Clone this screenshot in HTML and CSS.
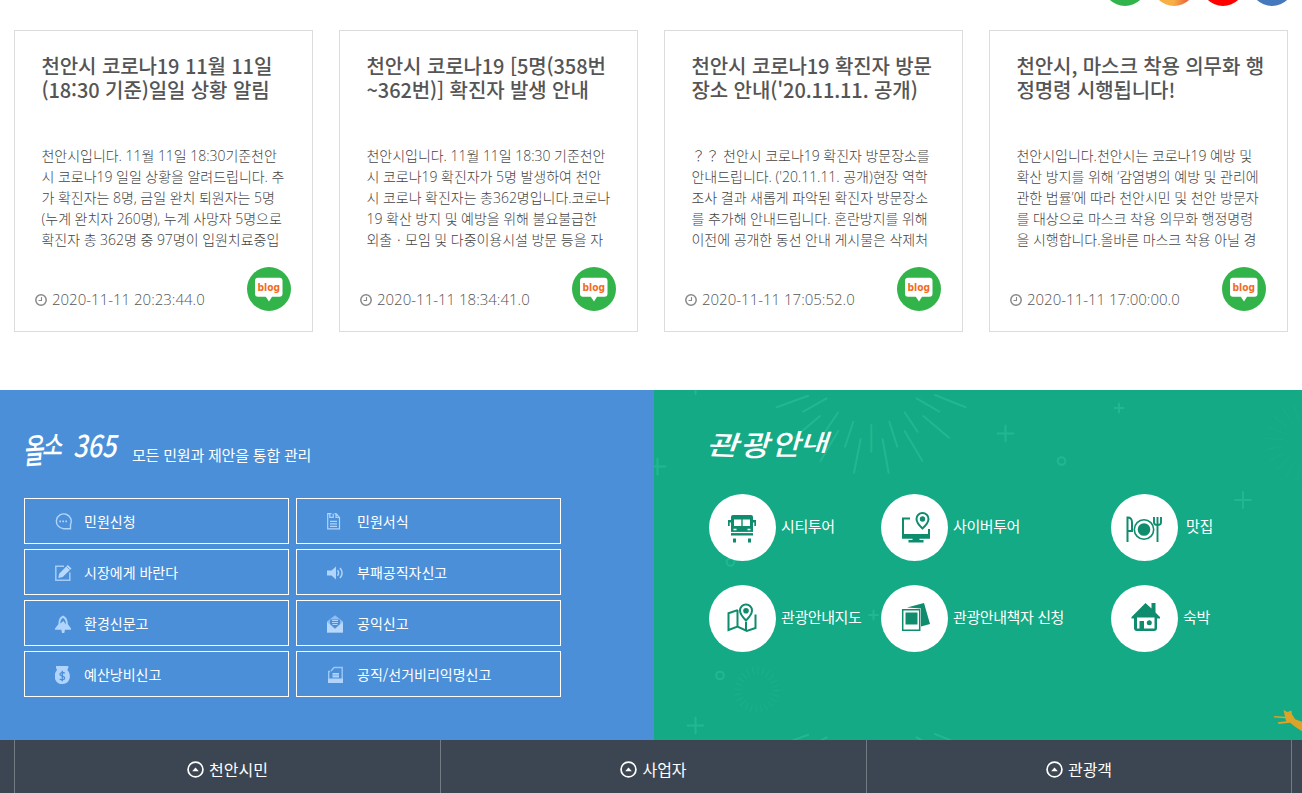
FILE: index.html
```html
<!DOCTYPE html>
<html lang="ko">
<head>
  <meta charset="UTF-8">
  <meta name="viewport" content="width=device-width, initial-scale=1.0">
  <title>천안시</title>
  <link rel="stylesheet" href="styles.css">
</head>
<body>
  <!-- shared shapes -->
  <svg width="0" height="0" class="defs">
    <defs>
      <symbol id="blog" viewBox="0 0 44 44">
        <circle cx="22" cy="22" r="22" fill="#33b44a"/>
        <path d="M11 10.700h21.500a3 3 0 0 1 3 3v13a3 3 0 0 1-3 3h-7.500L22 34.500l-3.200-4.800H11a3 3 0 0 1-3-3v-13a3 3 0 0 1 3-3z" fill="#fff"/>
        <text x="10.600" y="23.500" textLength="22.400" lengthAdjust="spacingAndGlyphs" class="blog-text">blog</text>
      </symbol>
      <symbol id="clock" viewBox="0 0 12 12">
        <circle cx="6" cy="6" r="5.200" fill="none" stroke="#888" stroke-width="1.500"/>
        <path d="M6.500 3v3.500H3.500" fill="none" stroke="#888" stroke-width="1.100"/>
      </symbol>
      <symbol id="up" viewBox="0 0 16 16">
        <circle cx="8" cy="8" r="7" fill="none" stroke="#fff" stroke-width="1.600"/>
        <path d="M4.900 9.600L8 6l3.100 3.600z" fill="#fff"/>
      </symbol>
      <g id="plus"><path d="M-8 0H8M0-8V8"/></g>
      <g id="plus-s"><path d="M-4.500 0h9M0-4.500v9"/></g>
      <g id="burst">
        <path d="M-94.700-27.700L-63-39.300M-68-23.300L-44.700-36.700M-51.300-19L-77 2.700M-33-22.700L-46.300-3.300M-33-4L-50.700 25.700M-18-13.300L-26.300 11.700M-10.700 4.300L-17.300 37.700M0-10V16.700M11.300 4.300L17.300 37.700M18-13.300L26 11.700M33.300-22.700L46.300-3.300M33.300-4L51 25.700M52-19L77.700 2.700M45.300-36.700L68-23.300M63.700-40L94.300-27.700"/>
      </g>
    </defs>
  </svg>

  <div class="sns">
    <span class="sns-item naver"></span>
    <span class="sns-item insta"></span>
    <span class="sns-item youtube"></span>
    <span class="sns-item facebook"></span>
  </div>

  <div class="cards">
    <div class="card">
      <h3>천안시 코로나19 11월 11일<br>(18:30 기준)일일 상황 알림</h3>
      <p>천안시입니다. 11월 11일 18:30기준천안<br>시 코로나19 일일 상황을 알려드립니다. 추<br>가 확진자는 8명, 금일 완치 퇴원자는 5명<br>(누계 완치자 260명), 누계 사망자 5명으로<br>확진자 총 362명 중 97명이 입원치료중입</p>
      <div class="card-foot">
        <svg class="clock"><use href="#clock"/></svg>
        <span class="date">2020-11-11 20:23:44.0</span>
        <svg class="badge"><use href="#blog"/></svg>
      </div>
    </div>
    <div class="card">
      <h3>천안시 코로나19 [5명(358번<br>~362번)] 확진자 발생 안내</h3>
      <p>천안시입니다. 11월 11일 18:30 기준천안<br>시 코로나19 확진자가 5명 발생하여 천안<br>시 코로나 확진자는 총362명입니다.코로나<br>19 확산 방지 및 예방을 위해 불요불급한<br>외출ㆍ모임 및 다중이용시설 방문 등을 자</p>
      <div class="card-foot">
        <svg class="clock"><use href="#clock"/></svg>
        <span class="date">2020-11-11 18:34:41.0</span>
        <svg class="badge"><use href="#blog"/></svg>
      </div>
    </div>
    <div class="card">
      <h3>천안시 코로나19 확진자 방문<br>장소 안내('20.11.11. 공개)</h3>
      <p>？？ 천안시 코로나19 확진자 방문장소를<br>안내드립니다. ('20.11.11. 공개)현장 역학<br>조사 결과 새롭게 파악된 확진자 방문장소<br>를 추가해 안내드립니다. 혼란방지를 위해<br>이전에 공개한 동선 안내 게시물은 삭제처</p>
      <div class="card-foot">
        <svg class="clock"><use href="#clock"/></svg>
        <span class="date">2020-11-11 17:05:52.0</span>
        <svg class="badge"><use href="#blog"/></svg>
      </div>
    </div>
    <div class="card">
      <h3>천안시, 마스크 착용 의무화 행<br>정명령 시행됩니다!</h3>
      <p>천안시입니다.천안시는 코로나19 예방 및<br>확산 방지를 위해 ‘감염병의 예방 및 관리에<br>관한 법률’에 따라 천안시민 및 천안 방문자<br>를 대상으로 마스크 착용 의무화 행정명령<br>을 시행합니다.올바른 마스크 착용 아닐 경</p>
      <div class="card-foot">
        <svg class="clock"><use href="#clock"/></svg>
        <span class="date">2020-11-11 17:00:00.0</span>
        <svg class="badge"><use href="#blog"/></svg>
      </div>
    </div>
  </div>

  <div class="panels">
    <section class="minwon">
      <div class="minwon-head">
        <svg class="brush" width="100" height="52" viewBox="0 0 100 52">
          <text x="-1" y="40" font-size="34" textLength="20" lengthAdjust="spacingAndGlyphs" transform="rotate(-4 12 30)">올</text>
          <text x="18" y="32" font-size="27" textLength="20" lengthAdjust="spacingAndGlyphs">소</text>
          <text x="49" y="34" font-size="30" textLength="43" lengthAdjust="spacingAndGlyphs">365</text>
        </svg>
        <span>모든 민원과 제안을 통합 관리</span>
      </div>
      <div class="minwon-list">
        <a class="minwon-item">
          <svg viewBox="0 0 18 18"><path d="M15.500 15.700H8.500A7.400 7.400 0 1 1 15.500 11.500z" fill="none" stroke="#b0d4fb" stroke-width="1.400"/><path d="M4.300 7.600h1.700v1.700H4.300zM7.300 7.600H9v1.700H7.300zM10.300 7.600H12v1.700h-1.700z" fill="#b0d4fb"/></svg>
          민원신청
        </a>
        <a class="minwon-item">
          <svg viewBox="0 0 18 18"><path d="M4.500.7H.7v15.100h11.800V4.500L9 .7H7.500M9 .7v3.800h3.500M3 8.300h7M3 10.800h7M3 13.300h7M2.800.7v3.600h3.400V.7" fill="none" stroke="#b0d4fb" stroke-width="1.200"/></svg>
          민원서식
        </a>
        <a class="minwon-item">
          <svg viewBox="0 0 18 18"><path d="M9 2.200H.8v14.100h14V8.500" fill="none" stroke="#a3cbf7" stroke-width="1.500"/><path d="M3.300 14l.9-4.300L12.700.9 16.500 4.400 7.700 13z" fill="#b9d9fc"/><path d="M11.500 2.500l3.400 3.300" stroke="#4b8fd9" stroke-width=".7"/></svg>
          시장에게 바란다
        </a>
        <a class="minwon-item">
          <svg viewBox="0 0 18 18"><path d="M0 6.500h4.500L9 2.500v13l-4.500-4H0z" fill="#b0d4fb"/><path d="M10.500 6.300q2.200 2.700 0 5.400M13 4q4.200 5 0 10" fill="none" stroke="#b0d4fb" stroke-width="1.500"/></svg>
          부패공직자신고
        </a>
        <a class="minwon-item">
          <svg viewBox="0 0 18 18"><path d="M8 .5C4.500 2 3.500 5 3.500 9L0 13.500v1.300h6.300L7 18h2.300l.7-3.200h6v-1.300L12.800 9C12.800 5 11.500 2 8 .5z" fill="#b0d4fb"/><path d="M7.800 2.700C6 4.300 5.300 6 5.300 8.500L8.500 6l2.300 3.600C11.200 6.500 10 4 7.800 2.700z" fill="#4b8fd9"/></svg>
          환경신문고
        </a>
        <a class="minwon-item">
          <svg viewBox="0 0 18 18"><path d="M0 6.500L8 .3l8 6.200v11H0z" fill="#8dbef3"/><path d="M0 7l8 7 8-7v10.500H0z" fill="#b9d9fc"/><path d="M3 4.500h10V9l-5 4.500L3 9z" fill="#4b8fd9"/><path d="M5 5.500h6M5 7.500h6M5.500 9.500h5" stroke="#b0d4fb"/></svg>
          공익신고
        </a>
        <a class="minwon-item">
          <svg viewBox="0 0 18 18"><path d="M1 0h12.300v2l-1 2c4 3 4 14-4.800 14S-2 8 2 4L1 2z" fill="#b0d4fb"/><path d="M9.800 7.300C8 6 4.800 6.300 5 8.500c.3 2 4.600 1.300 4.700 3.500.1 2-3.400 2.300-5 .9M7.300 4.800v10.400" fill="none" stroke="#4b8fd9" stroke-width="1.300"/></svg>
          예산낭비신고
        </a>
        <a class="minwon-item">
          <svg viewBox="0 0 18 18"><path d="M1.700 14V5.500h1.500M4 5L7 1.500h8.200V14" fill="none" stroke="#9cc7f5" stroke-width="1.400"/><path d="M1 12.500h15V17H1zM5.500 7h6.500v4.500H5.500z" fill="#b0d4fb"/><path d="M6 9h6" stroke="#78afe9"/></svg>
          공직/선거비리익명신고
        </a>
      </div>
    </section>

    <section class="tour">
      <svg class="tour-bg" viewBox="0 0 648 350" fill="none" stroke="#22b791" stroke-width="2" stroke-linecap="round">
        <use href="#burst" x="217.300" y="45"/>
        <use href="#burst" x="217.300" y="384"/>
        <use href="#plus" x="3.500" y="76.500"/>
        <use href="#plus" x="41.500" y="-4"/>
        <use href="#plus" x="41.500" y="335.500"/>
        <use href="#plus" x="351.500" y="43.500"/>
        <use href="#plus" x="589" y="110"/>
        <use href="#plus-s" x="219.500" y="225"/>
        <use href="#plus-s" x="465" y="18"/>
        <circle cx="76.500" cy="172" r="3.800"/>
        <circle cx="66" cy="285.500" r="3.800"/>
        <circle cx="407.500" cy="71" r="3.800"/>
        <circle cx="103" cy="300" r="19" stroke="#1ab08a" stroke-width="8" stroke-dasharray="1 3.970" stroke-linecap="butt"/>
        <circle cx="651" cy="52" r="30" stroke="#19ae89" stroke-width="20" stroke-dasharray=".8 8" stroke-linecap="butt"/>
        <path d="M620 326l11 .7L629.500 320l4 2 4-1.600.3 3.600 3.300 5.300 7 2.400v9.600l-7-4.600-5-4-11.500 1.300-.9-1.700 8.600-1-1-3-11-.8z" fill="#dba32a" stroke="none"/>
      </svg>
      <div class="tour-inner">
        <svg class="brush" width="130" height="44" viewBox="0 0 130 44">
          <text x="-3" y="32" font-size="27" textLength="32" lengthAdjust="spacingAndGlyphs" transform="rotate(2 16 22)">관</text>
          <text x="31" y="33" font-size="29" textLength="29" lengthAdjust="spacingAndGlyphs">광</text>
          <text x="62" y="32" font-size="29" textLength="29" lengthAdjust="spacingAndGlyphs">안</text>
          <text x="91" y="28" font-size="23" textLength="28" lengthAdjust="spacingAndGlyphs">내</text>
        </svg>
        <div class="tour-list">
          <a class="tour-item">
            <span class="tour-icon bus"><svg viewBox="0 0 34 34"><path d="M7 3h18q2 0 2 2v18.500H5V5q0-2 2-2zM7 26.500h3v4H7zM22 26.500h3v4h-3z" fill="#0f8c6d"/><path d="M2 8h3v2.500H3.700V14H2zM27 8h3v6h-1.700v-3.500H27z" fill="#0f8c6d"/><path d="M8 7.500h7.300V14H8zM16.700 7.500H24V14h-7.300z" fill="#fff"/><path d="M5 20.500h22" stroke="#fff" stroke-width="1.200"/><path d="M7.500 17.500h3M21.500 17.500h3" stroke="#fff" stroke-width="1.500"/></svg></span>
            <span class="label">시티투어</span>
          </a>
          <a class="tour-item">
            <span class="tour-icon"><svg viewBox="0 0 34 34"><path d="M12 6.500H5v19h26V17" fill="none" stroke="#0f8c6d" stroke-width="2"/><path d="M4 22h28v4.500H4zM14.500 26.500h7V28h4v2.500h-15V28h4z" fill="#0f8c6d"/><path d="M24.500 16.500q-6-5.500-6-9.500a6 6 0 0 1 12 0q0 4-6 9.500z" fill="#fff" stroke="#0f8c6d" stroke-width="2"/><circle cx="24.500" cy="7" r="2.700" fill="#0f8c6d"/></svg></span>
            <span class="label">사이버투어</span>
          </a>
          <a class="tour-item dining">
            <span class="tour-icon"><svg viewBox="0 0 38 34"><path d="M1.500 30V5.500q4.500-.2 4.500 5V19H1.500" fill="none" stroke="#0f8c6d" stroke-width="2"/><circle cx="18" cy="17.500" r="9.700" fill="none" stroke="#0f8c6d" stroke-width="1.600"/><circle cx="18" cy="17.500" r="6.300" fill="#0f8c6d"/><path d="M31.500 30V5M28 5v5.500q0 2.500 3.500 2.500t3.500-2.500V5" fill="none" stroke="#0f8c6d" stroke-width="1.900"/></svg></span>
            <span class="label">맛집</span>
          </a>
          <a class="tour-item">
            <span class="tour-icon"><svg viewBox="0 0 34 34"><path d="M12 8l-1-.7-8.500 3V27l9-3.500 9.300 4.500 8.700-3V11.500M11.500 7.300v16.200M20 19v9" fill="none" stroke="#0f8c6d" stroke-width="2"/><path d="M20 17.500q-6-6-6-10a6 6 0 0 1 12 0q0 4-6 10z" fill="#fff" stroke="#0f8c6d" stroke-width="2"/><circle cx="20" cy="7.800" r="2.800" fill="#0f8c6d"/></svg></span>
            <span class="label">관광안내지도</span>
          </a>
          <a class="tour-item">
            <span class="tour-icon"><svg viewBox="0 0 34 34"><path d="M9 4.500L26 0l6 21-9 2.500V5.500z" fill="#0f8c6d"/><path d="M4.700 6.700h17v20.600h-17z" fill="#fff" stroke="#0f8c6d" stroke-width="1.500"/><path d="M7.500 9.500H19.500v12H7.500z" fill="#0f8c6d"/></svg></span>
            <span class="label">관광안내책자 신청</span>
          </a>
          <a class="tour-item">
            <span class="tour-icon"><svg viewBox="0 0 34 34"><path d="M3.500 14L17.500 0l6 5.500V0h4v9.500l4.500 4.500v1.500H29V25q0 3-3 3H9q-3 0-3-3v-9.500H3.500z" fill="#0f8c6d"/><path d="M9 14.500h17.500v11H16V18h-4.500v7.500H9z" fill="#fff"/><path d="M13 19h2v6.500h-2z" fill="#0f8c6d"/><circle cx="21.300" cy="19.800" r="2.500" fill="#0f8c6d"/></svg></span>
            <span class="label">숙박</span>
          </a>
        </div>
      </div>
    </section>
  </div>

  <footer class="quick">
    <a class="quick-item"><svg><use href="#up"/></svg>천안시민</a>
    <a class="quick-item"><svg><use href="#up"/></svg>사업자</a>
    <a class="quick-item"><svg><use href="#up"/></svg>관광객</a>
  </footer>
</body>
</html>
```

FILE: styles.css
```css
* {
  margin: 0;
  padding: 0;
  box-sizing: border-box;
}

body {
  font-family: "Noto Sans CJK KR", sans-serif;
  background: #fff;
  color: #555;
  overflow: hidden;
}

svg {
  display: block;
  flex-shrink: 0;
}

.defs {
  position: absolute;
}

/* sns */
.sns {
  height: 30px;
  padding: 0 8px 24px 0;
  display: flex;
  justify-content: flex-end;
  align-items: flex-end;
  gap: 5px;
  overflow: hidden;
}

.sns-item {
  width: 44px;
  height: 44px;
  flex-shrink: 0;
  border-radius: 50%;
}

.naver { background: #33b44a; }
.insta { background: linear-gradient(100deg, #f7b045 55%, #ee6a3c 80%); }
.youtube { background: #f00; }
.facebook { background: #4479bd; }

/* cards */
.cards {
  display: grid;
  grid-template-columns: repeat(4, 299px);
  gap: 26px;
  padding-left: 14px;
}

.card {
  height: 302px;
  padding: 23px 20px 0;
  border: 1px solid #dcdcdc;
  white-space: nowrap;
}

.card h3 {
  height: 91px;
  padding-left: 6.5px;
  font-size: 20px;
  font-weight: 500;
  line-height: 24px;
  letter-spacing: -0.1px;
}

.card p,
.date {
  font-family: "Open Sans", "Noto Sans CJK KR", sans-serif;
  font-weight: 300;
}

.card p {
  padding-left: 6.5px;
  color: #444;
  font-size: 14px;
  line-height: 21px;
  letter-spacing: -0.03px;
}

.card-foot {
  display: flex;
  align-items: center;
  height: 44px;
  margin-top: 17px;
  padding-right: 1px;
}

.clock {
  width: 12px;
  height: 12px;
  margin-top: 22px;
}

.date {
  flex: 1;
  margin: 20px 0 0 5px;
  font-size: 15px;
}

.badge {
  width: 44px;
  height: 44px;
}

.blog-text {
  font: 700 10px "DejaVu Sans", sans-serif;
  fill: #f26c1f;
}

/* panels */
.panels {
  display: grid;
  grid-template-columns: 654px 1fr;
  height: 350px;
  margin-top: 58px;
  color: #fff;
}

.brush {
  overflow: visible;
  font-style: italic;
  font-weight: 500;
  fill: #fff;
}

.minwon {
  background: #4b8fd9;
  padding: 33px 0 0 24px;
}

.minwon-head {
  display: flex;
  gap: 8px;
  height: 75px;
  font-size: 15px;
  letter-spacing: -0.2px;
}

.minwon-head span {
  padding-top: 21px;
}

.minwon-list {
  display: grid;
  grid-template-columns: 265px 265px;
  grid-auto-rows: 46px;
  gap: 5px 7px;
}

.minwon-item {
  display: flex;
  align-items: center;
  gap: 11px;
  padding-left: 30px;
  border: 1px solid #fff;
  font-size: 14px;
}

.minwon-item:nth-child(even) {
  gap: 12px;
}

.minwon-item svg {
  width: 18px;
  height: 18px;
  margin-top: 2px;
}

.tour {
  position: relative;
  background: #13aa85;
}

.tour-bg {
  position: absolute;
  inset: 0;
  width: 648px;
  height: 350px;
}

.tour-inner {
  position: relative;
  padding: 33px 0 0 55px;
}

.tour-list {
  display: grid;
  grid-template-columns: 172px 230px 150px;
  row-gap: 24px;
  margin-top: 27px;
}

.tour-item {
  display: flex;
  align-items: center;
  gap: 5px;
  font-size: 15px;
  letter-spacing: -0.4px;
  white-space: nowrap;
}

.tour-item.dining {
  gap: 8px;
}

.label {
  padding-bottom: 4px;
}

.tour-icon {
  display: flex;
  justify-content: center;
  align-items: center;
  width: 67px;
  height: 67px;
  padding-top: 2px;
  border-radius: 50%;
  background: #fff;
}

.tour-icon svg {
  height: 34px;
  width: auto;
}

.tour-icon.bus {
  padding-left: 1px;
}

/* bottom menu */
.quick {
  display: grid;
  grid-template-columns: repeat(3, 426px);
  height: 53px;
  padding-left: 14px;
  background: #3c4652;
}

.quick-item {
  display: flex;
  justify-content: center;
  align-items: center;
  gap: 5px;
  padding-top: 5px;
  border-left: 1px solid #727a83;
  color: #fff;
  font-size: 16px;
}

.quick-item:last-child {
  border-right: 1px solid #727a83;
}

.quick-item svg {
  width: 17px;
  height: 17px;
}
```
